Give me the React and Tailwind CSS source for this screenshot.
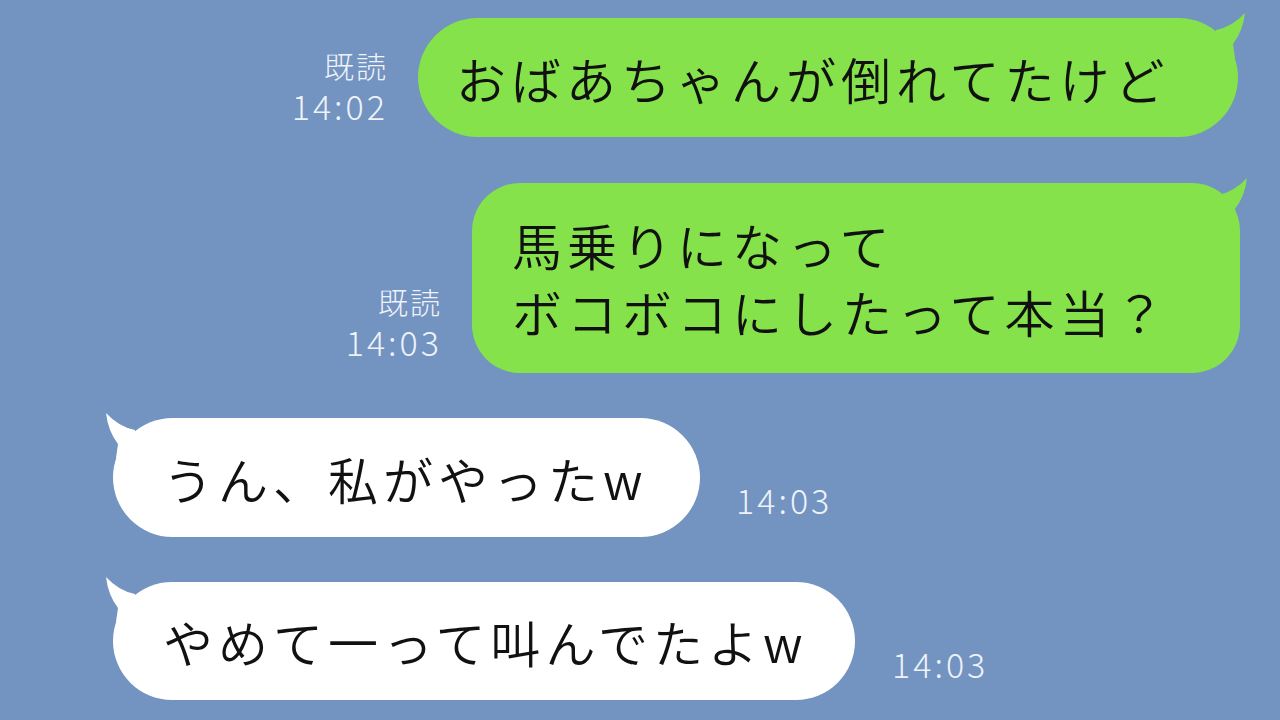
import React from 'react';

const Tail = ({ color, left }) => (
  <svg
    viewBox="0 0 40 50"
    className={
      left
        ? 'absolute top-[-8px] left-[-10px] w-[40px] h-[50px] -scale-x-100'
        : 'absolute top-[-8px] right-[-10px] w-[40px] h-[50px]'
    }
  >
    <path d="M8,20 Q24,17 37,3 Q35,21 25,34 L27,48 L8,48 Z" fill={color} />
  </svg>
);

const Stamp = ({ read, time }) => (
  <div className="flex flex-col items-end gap-[4px] text-[#eef2f9]">
    {read && <div className="text-[30px] leading-[36px] tracking-[2px] font-light">{read}</div>}
    <div className="text-[34px] leading-[38px] tracking-[3px] font-light">{time}</div>
  </div>
);

export default function App() {
  return (
    <div
      className="w-[1280px] h-[720px] bg-[#7393c1] overflow-hidden flex flex-col text-[#111]"
      style={{ fontFamily: '"Noto Sans CJK JP", "Noto Sans", sans-serif' }}
    >
      {/* 1 */}
      <div className="flex justify-end items-end gap-[30px] pr-[42px] pt-[18px]">
        <div className="pb-[12px]">
          <Stamp read="既読" time="14:02" />
        </div>
        <div className="relative w-[820px] h-[119px] rounded-[60px] bg-[#85e24b] flex items-center pl-[38px]">
          <Tail color="#85e24b" />
          <span className="relative text-[50px] leading-[60px] tracking-[5px] font-[350] whitespace-nowrap">
            おばあちゃんが倒れてたけど
          </span>
        </div>
      </div>

      {/* 2 */}
      <div className="flex justify-end items-end gap-[30px] pr-[40px] mt-[46px]">
        <div className="pb-[12px]">
          <Stamp read="既読" time="14:03" />
        </div>
        <div className="relative w-[768px] h-[190px] rounded-[48px] bg-[#85e24b] flex items-center pl-[40px]">
          <Tail color="#85e24b" />
          <div className="relative text-[50px] leading-[67px] tracking-[5px] font-[350] whitespace-nowrap">
            <div>馬乗りになって</div>
            <div>ボコボコにしたって本当？</div>
          </div>
        </div>
      </div>

      {/* 3 */}
      <div className="flex items-end gap-[36px] pl-[113px] mt-[45px]">
        <div className="relative w-[587px] h-[119px] rounded-[60px] bg-white flex items-center pl-[50px]">
          <Tail color="#ffffff" left />
          <span className="relative text-[50px] leading-[60px] tracking-[5px] font-[350] whitespace-nowrap">
            うん、私がやったw
          </span>
        </div>
        <div className="pb-[18px]">
          <Stamp time="14:03" />
        </div>
      </div>

      {/* 4 */}
      <div className="flex items-end gap-[37px] pl-[113px] mt-[45px]">
        <div className="relative w-[742px] h-[118px] rounded-[60px] bg-white flex items-center pl-[50px]">
          <Tail color="#ffffff" left />
          <span className="relative text-[50px] leading-[60px] tracking-[5px] font-[350] whitespace-nowrap">
            やめて一って叫んでたよw
          </span>
        </div>
        <div className="pb-[17px]">
          <Stamp time="14:03" />
        </div>
      </div>
    </div>
  );
}
